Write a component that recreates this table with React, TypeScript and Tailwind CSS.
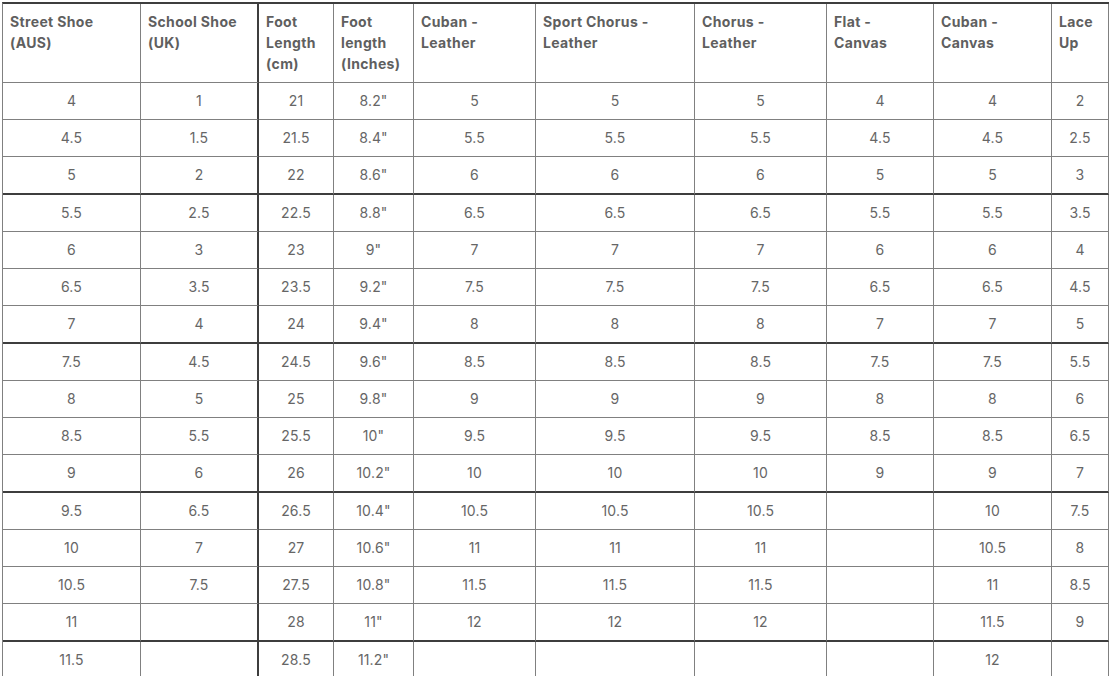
import React from "react";

const headers: string[][] = [
  ["Street Shoe", "(AUS)"],
  ["School Shoe", "(UK)"],
  ["Foot", "Length", "(cm)"],
  ["Foot", "length", "(Inches)"],
  ["Cuban -", "Leather"],
  ["Sport Chorus -", "Leather"],
  ["Chorus -", "Leather"],
  ["Flat -", "Canvas"],
  ["Cuban -", "Canvas"],
  ["Lace", "Up"],
];

const rows: string[][] = [
  ["4", "1", "21", '8.2"', "5", "5", "5", "4", "4", "2"],
  ["4.5", "1.5", "21.5", '8.4"', "5.5", "5.5", "5.5", "4.5", "4.5", "2.5"],
  ["5", "2", "22", '8.6"', "6", "6", "6", "5", "5", "3"],
  ["5.5", "2.5", "22.5", '8.8"', "6.5", "6.5", "6.5", "5.5", "5.5", "3.5"],
  ["6", "3", "23", '9"', "7", "7", "7", "6", "6", "4"],
  ["6.5", "3.5", "23.5", '9.2"', "7.5", "7.5", "7.5", "6.5", "6.5", "4.5"],
  ["7", "4", "24", '9.4"', "8", "8", "8", "7", "7", "5"],
  ["7.5", "4.5", "24.5", '9.6"', "8.5", "8.5", "8.5", "7.5", "7.5", "5.5"],
  ["8", "5", "25", '9.8"', "9", "9", "9", "8", "8", "6"],
  ["8.5", "5.5", "25.5", '10"', "9.5", "9.5", "9.5", "8.5", "8.5", "6.5"],
  ["9", "6", "26", '10.2"', "10", "10", "10", "9", "9", "7"],
  ["9.5", "6.5", "26.5", '10.4"', "10.5", "10.5", "10.5", "", "10", "7.5"],
  ["10", "7", "27", '10.6"', "11", "11", "11", "", "10.5", "8"],
  ["10.5", "7.5", "27.5", '10.8"', "11.5", "11.5", "11.5", "", "11", "8.5"],
  ["11", "", "28", '11"', "12", "12", "12", "", "11.5", "9"],
  ["11.5", "", "28.5", '11.2"', "", "", "", "", "12", ""],
];

// every 4th row line renders heavier in the source
const thickRow = (i: number) => i % 4 === 2;

function Cell({
  col,
  thick,
  header,
  children,
}: {
  col: number;
  thick: boolean;
  header?: boolean;
  children: React.ReactNode;
}) {
  const right = col === 1 ? "border-r-2 border-r-[#3d3d3d]" : "border-r border-r-[#808080]";
  const bottom = thick ? "border-b-2 border-b-[#3d3d3d]" : "border-b border-b-[#808080]";
  return (
    <div
      className={
        header
          ? `${right} ${bottom} h-[79px] pl-[7px] pt-[7px] text-[14px] leading-[21px] font-bold tracking-[0.025em] text-[#5f5f5f] whitespace-nowrap`
          : `${right} ${bottom} ${thick ? "h-[38px]" : "h-[37px]"} flex items-center justify-center pb-[1px] text-[14px] tracking-[0.01em] text-[#666666]`
      }
    >
      {children}
    </div>
  );
}

export default function App() {
  return (
    <div className="bg-white min-h-screen pl-[2px] pt-[2px]" style={{ fontFamily: "Inter, 'Noto Sans', sans-serif" }}>
      <div className="w-[1107px] border-l border-l-[#808080] border-t-2 border-t-[#3d3d3d] grid grid-cols-[138px_118px_75px_80px_122px_159px_132px_107px_118px_57px]">
        {headers.map((lines, c) => (
          <Cell key={`h${c}`} col={c} thick={false} header>
            {lines.map((l, k) => (
              <div key={k}>{l}</div>
            ))}
          </Cell>
        ))}
        {rows.map((r, i) =>
          r.map((v, c) => (
            <Cell key={`${i}-${c}`} col={c} thick={thickRow(i)}>
              {v}
            </Cell>
          ))
        )}
      </div>
    </div>
  );
}
